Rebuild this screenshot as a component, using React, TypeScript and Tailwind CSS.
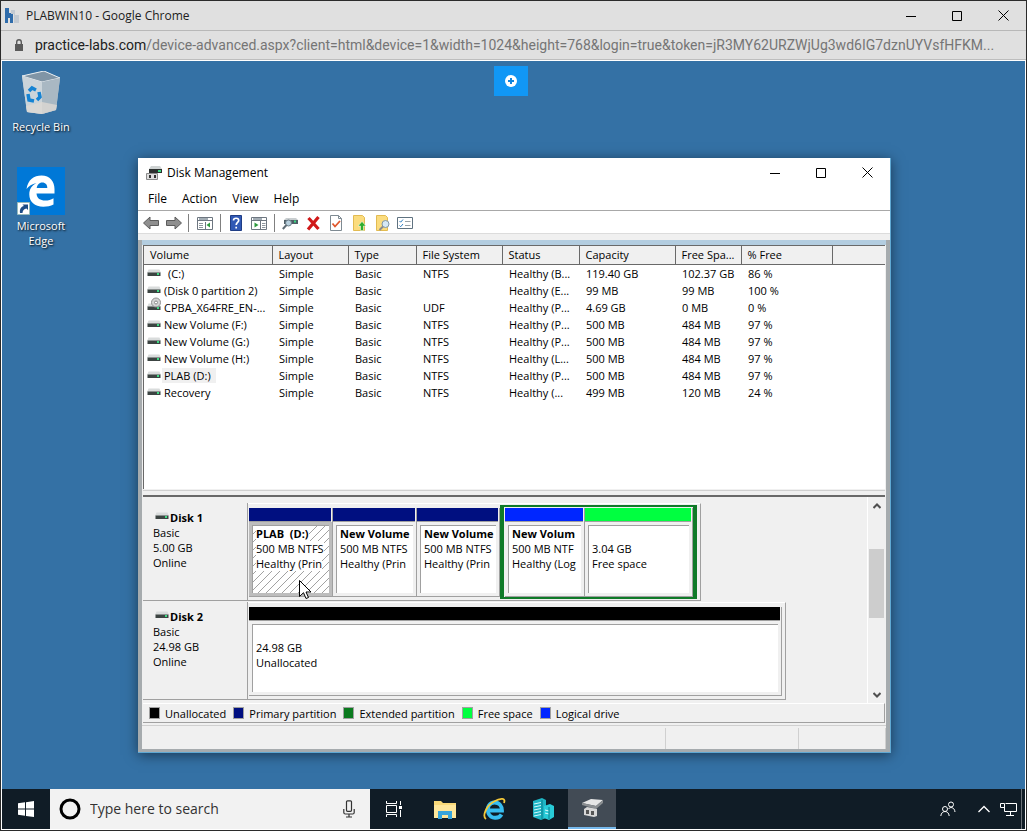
import React from 'react';

const volumes = [
  { name: '(C:)', fs: 'NTFS', status: 'Healthy (B...', capacity: '119.40 GB', free: '102.37 GB', pct: '86 %' },
  { name: '(Disk 0 partition 2)', fs: '', status: 'Healthy (E...', capacity: '99 MB', free: '99 MB', pct: '100 %' },
  { name: 'CPBA_X64FRE_EN-...', fs: 'UDF', status: 'Healthy (P...', capacity: '4.69 GB', free: '0 MB', pct: '0 %', cd: true },
  { name: 'New Volume (F:)', fs: 'NTFS', status: 'Healthy (P...', capacity: '500 MB', free: '484 MB', pct: '97 %' },
  { name: 'New Volume (G:)', fs: 'NTFS', status: 'Healthy (P...', capacity: '500 MB', free: '484 MB', pct: '97 %' },
  { name: 'New Volume (H:)', fs: 'NTFS', status: 'Healthy (L...', capacity: '500 MB', free: '484 MB', pct: '97 %' },
  { name: 'PLAB (D:)', fs: 'NTFS', status: 'Healthy (P...', capacity: '500 MB', free: '484 MB', pct: '97 %', selected: true },
  { name: 'Recovery', fs: 'NTFS', status: 'Healthy (...', capacity: '499 MB', free: '120 MB', pct: '24 %' },
];

const columns = [
  { label: 'Volume', width: 'w-[128px]' },
  { label: 'Layout', width: 'w-[76px]' },
  { label: 'Type', width: 'w-[68px]' },
  { label: 'File System', width: 'w-[86px]' },
  { label: 'Status', width: 'w-[77px]' },
  { label: 'Capacity', width: 'w-[96px]' },
  { label: 'Free Spa...', width: 'w-[66px]' },
  { label: '% Free', width: 'w-[91px]' },
  { label: '', width: '' },
];

const legend = [
  { label: 'Unallocated', color: 'bg-black' },
  { label: 'Primary partition', color: 'bg-[#000f80]' },
  { label: 'Extended partition', color: 'bg-[#0a7a1e]' },
  { label: 'Free space', color: 'bg-[#00ff40]' },
  { label: 'Logical drive', color: 'bg-[#0026ff]' },
];

const DriveIcon = ({ cd, className = '' }: { cd?: boolean; className?: string }) => (
  <svg width="14" height="16" viewBox="0 0 14 16" className={`shrink-0 overflow-visible ${className}`}>
    <path d="M1.500 4.500h11L14 8H0z" fill="#d9dcdc" />
    <rect x=".5" y="7.500" width="13" height="3.500" fill="#3c4442" />
    <rect x="10" y="8" width="2" height="2" fill="#3ddc84" />
    {cd && (
      <g>
        <circle cx="9" cy="3.500" r="4.500" fill="#d4d4d4" stroke="#909090" />
        <circle cx="9" cy="3.500" r="1.500" fill="#fff" stroke="#8a8a8a" />
      </g>
    )}
  </svg>
);

const WindowButtons = ({ className }: { className: string }) => (
  <div className={`flex text-black ${className}`}>
    <button aria-label="Minimize" className="w-[46px] h-full flex items-center justify-center">
      <svg width="10" height="10" stroke="currentColor"><path d="M0 5.500h10" /></svg>
    </button>
    <button aria-label="Maximize" className="w-[46px] h-full flex items-center justify-center">
      <svg width="10" height="10" stroke="currentColor" fill="none"><path d="M.5.5h9v9h-9z" /></svg>
    </button>
    <button aria-label="Close" className="w-[46px] h-full flex items-center justify-center">
      <svg width="11" height="11" stroke="currentColor" fill="none"><path d="M.5.5l10 10M10.500 .5l-10 10" /></svg>
    </button>
  </div>
);

const ToolButton = ({ label, className = '', children }: { label: string; className?: string; children: React.ReactNode }) => (
  <button aria-label={label} className={`w-4 h-4 shrink-0 ${className}`}>
    <svg width="16" height="16" viewBox="0 0 16 16" fill="none" className="overflow-visible">
      {children}
    </svg>
  </button>
);

const Separator = () => <div className="w-px h-[18px] bg-[#808080]" />;

const Toolbar = () => (
  <div className="h-[23px] flex items-center pl-[5px] pt-[2px] border-b border-[#dcdcdc] bg-white">
    <ToolButton label="Back">
      <path d="M.5 8L7 2v3.500h8.500v5H7V14z" fill="#8f8f8f" stroke="#5c5c5c" />
    </ToolButton>
    <ToolButton label="Forward" className="ml-[7px] mr-[6px]">
      <path d="M15.500 8L9 2v3.500H.5v5H9V14z" fill="#8f8f8f" stroke="#5c5c5c" />
    </ToolButton>
    <Separator />
    <ToolButton label="Show console tree" className="ml-[8px] mr-[7px]">
      <path d="M.5 2.500h15v12H.5zM.5 5.500h15M8.500 7v7" fill="#fff" stroke="#6d7680" />
      <path d="M2 4h9" stroke="#a3adb5" strokeWidth="2" />
      <path d="M2 8.500h4M2 10.500h4M2 12.500h4" stroke="#8c959c" />
      <path d="M13 7.500v5L9.500 10z" fill="#2d9a3d" />
    </ToolButton>
    <Separator />
    <ToolButton label="Help" className="ml-[7px]">
      <path d="M2.500.5h11v15h-11z" fill="#3159b5" stroke="#1f3d85" />
      <path d="M5.500 5.500C5.500 2.500 10.700 2.500 10.700 5.500C10.700 7.500 8.200 7.500 8.200 10M8.200 11.700v1.800" stroke="#fff" strokeWidth="1.700" />
    </ToolButton>
    <ToolButton label="Show action pane" className="ml-[7px] mr-[7px]">
      <path d="M.5 2.500h15v12H.5zM.5 5.500h15M9.500 6v8" fill="#fff" stroke="#6d7680" />
      <path d="M2 4h9" stroke="#a3adb5" strokeWidth="2" />
      <path d="M11 8.500h3.500M11 10.500h3.500M11 12.500h3.500" stroke="#8c959c" />
      <path d="M3.500 7.500v5L7.500 10z" fill="#2d9a3d" />
    </ToolButton>
    <Separator />
    <ToolButton label="Connect" className="ml-[7px]">
      <path d="M2 5l2-2h10l2 2z" fill="#c9ced0" />
      <path d="M2 5h14v4H2z" fill="#4e5e66" />
      <path d="M12 6.500h2" stroke="#3ddc84" strokeWidth="2" />
      <circle cx="6.500" cy="8" r="3" fill="#b8d0de" stroke="#6c7d88" />
      <path d="M4.500 10L.8 14" stroke="#5f6c75" strokeWidth="2" />
    </ToolButton>
    <ToolButton label="Delete" className="ml-[7px]">
      <path d="M3.500 3l10 11M13.500 2L3 14.500" stroke="#d01818" strokeWidth="3.200" />
    </ToolButton>
    <ToolButton label="Properties" className="ml-[7px]">
      <path d="M2.500.5h8l3 3v12h-11z" fill="#fff" stroke="#7e8a92" />
      <path d="M10.500.5v3h3" stroke="#7e8a92" />
      <path d="M4.500 8.500l2.500 3 5-5.500" stroke="#e0572c" strokeWidth="1.800" />
    </ToolButton>
    <ToolButton label="Extend" className="ml-[8px]">
      <path d="M1.500.5h9l2 2v13h-11z" fill="#fbdc7e" stroke="#e2bb52" />
      <path d="M10 6.500l4 4.500h-2.500v4.500h-3V11H6z" fill="#2fae2f" stroke="#fff" strokeWidth=".5" />
    </ToolButton>
    <ToolButton label="Explore" className="ml-[7px]">
      <path d="M1.500.5h9l2 2v13h-11z" fill="#fbdc7e" stroke="#e2bb52" />
      <circle cx="10.500" cy="9" r="3.500" fill="#d5e8f5" stroke="#7f95a5" />
      <path d="M8 11.500L4.500 15" stroke="#8b8b8b" strokeWidth="2" />
    </ToolButton>
    <ToolButton label="List" className="ml-[6px]">
      <path d="M.5 2.500h15v11H.5z" fill="#fff" stroke="#5f7280" />
      <path d="M2.500 6l1.200 1.200L6 4.500M2.500 10.500l1.200 1.200L6 9" stroke="#2f7fc4" />
      <path d="M8 6.500h5.500M8 10.500h5.500" stroke="#98a2a8" />
    </ToolButton>
  </div>
);

const VolumeTable = () => (
  <div className="h-[244px] bg-white border-l border-t border-[#696969] overflow-hidden">
    <table className="w-full table-fixed border-collapse text-left">
      <thead>
        <tr className="h-[18px] bg-[#f0f0f0]">
          {columns.map((c) => (
            <th key={c.label} className={`${c.width} p-0 pl-[6px] font-normal whitespace-nowrap border-r border-b border-[#696969] last:border-r-0`}>
              {c.label}
            </th>
          ))}
        </tr>
      </thead>
      <tbody>
        {volumes.map((v) => (
          <tr key={v.name} className="h-[17px] whitespace-nowrap">
            <td className="p-0 pl-[3px]">
              <div className="flex items-center h-[17px]">
                <DriveIcon cd={v.cd} />
                <span className={`ml-px pr-[5px] ${v.selected ? 'bg-[#f0f0f0]' : ''} ${v.name === '(C:)' ? 'pl-[6px]' : 'pl-[2px]'}`}>{v.name}</span>
              </div>
            </td>
            <td className="p-0 pl-[7px]">Simple</td>
            <td className="p-0 pl-[7px]">Basic</td>
            <td className="p-0 pl-[7px]">{v.fs}</td>
            <td className="p-0 pl-[7px]">{v.status}</td>
            <td className="p-0 pl-[7px]">{v.capacity}</td>
            <td className="p-0 pl-[7px]">{v.free}</td>
            <td className="p-0 pl-[7px]">{v.pct}</td>
            <td />
          </tr>
        ))}
      </tbody>
    </table>
  </div>
);

type PartitionProps = { bar: string; width: string; title?: string; lines: string[]; selected?: boolean };

const Partition = ({ bar, width, title, lines, selected }: PartitionProps) => (
  <div className={`${width} h-full flex flex-col shrink-0 border-r border-b border-[#a0a0a0]`}>
    <div className={`h-[14px] mr-px border-b border-[#a0a0a0] ${bar}`} />
    <div className={`flex-1 min-h-0 flex ${selected ? 'border-3 border-[#bdbdbd]' : 'p-[3px]'}`}>
      <div className="relative flex-1 min-w-0 pl-[3px] border-l border-t border-[#a0a0a0] bg-white">
        {selected && (
          <svg className="absolute inset-0 w-full h-full">
            <pattern id="hatch" width="8" height="8" patternUnits="userSpaceOnUse">
              <path d="M-1 9L9 -1M-1 1L1 -1M7 9L9 7" stroke="#8a8a8a" strokeWidth=".8" />
            </pattern>
            <rect width="100%" height="100%" fill="url(#hatch)" />
          </svg>
        )}
        <div className="relative leading-[15px] overflow-hidden whitespace-pre">
          <p className="h-[15px] font-bold">
            <span className={selected ? 'bg-white' : ''}>{title}</span>
          </p>
          {lines.map((l) => (
            <p key={l}>
              <span className={selected ? 'bg-white' : ''}>{l}</span>
            </p>
          ))}
        </div>
      </div>
    </div>
  </div>
);

const DiskRow = ({ name, size, children }: { name: string; size: string; children: React.ReactNode }) => (
  <div className="flex h-[98px]">
    <div className="w-[105px] shrink-0 pl-[10px] pt-[7px] leading-[15px] border-r border-b border-[#a0a0a0]">
      <div className="flex h-[15px] items-center pl-[2px] font-bold">
        <DriveIcon className="mb-1" />
        <span className="ml-px">{name}</span>
      </div>
      <p>Basic</p>
      <p>{size}</p>
      <p>Online</p>
    </div>
    <div className="flex pt-[4px] pl-px pr-[3px] pb-[3px] border-t border-t-white border-r border-b border-r-[#a0a0a0] border-b-[#a0a0a0]">
      {children}
    </div>
  </div>
);

const DiskPane = () => (
  <div className="flex h-[206px]">
    <div className="flex-1 min-w-0 pt-[6px] flex flex-col items-start gap-px">
      <DiskRow name="Disk 1" size="5.00 GB">
        <Partition bar="bg-[#000f80]" width="w-[84px]" title="PLAB  (D:)" lines={['500 MB NTFS', 'Healthy (Prin']} selected />
        <Partition bar="bg-[#000f80]" width="w-[84px]" title="New Volume" lines={['500 MB NTFS', 'Healthy (Prin']} />
        <Partition bar="bg-[#000f80]" width="w-[83px]" title="New Volume" lines={['500 MB NTFS', 'Healthy (Prin']} />
        <div className="flex -mt-[3px] -mb-[2px] pt-px pl-px border-x-4 border-y-2 border-[#0f7a28]">
          <Partition bar="bg-[#0026ff]" width="w-[80px]" title="New Volum" lines={['500 MB NTF', 'Healthy (Log']} />
          <Partition bar="bg-[#00ff40]" width="w-[108px]" lines={['3.04 GB', 'Free space']} />
        </div>
      </DiskRow>
      <DiskRow name="Disk 2" size="24.98 GB">
        <Partition bar="bg-black" width="w-[533px]" lines={['24.98 GB', 'Unallocated']} />
      </DiskRow>
    </div>
    <div className="w-[18px] flex flex-col items-center border-l border-white">
      <button aria-label="Scroll up" className="h-[17px] flex items-center">
        <svg width="8" height="6" fill="none" stroke="#505050" strokeWidth="2"><path d="M.5 5L4 1.500 7.500 5" /></svg>
      </button>
      <div className="mt-[35px] h-[69px] w-[15px] bg-[#cdcdcd]" />
      <button aria-label="Scroll down" className="mt-auto h-[17px] flex items-center">
        <svg width="8" height="6" fill="none" stroke="#505050" strokeWidth="2"><path d="M.5 1L4 4.500 7.500 1" /></svg>
      </button>
    </div>
  </div>
);

const DiskManagement = () => (
  <section className="absolute left-[136px] right-[134px] top-[97px] bg-[#f0f0f0] border-r border-b border-[#5fa8d3] shadow-[0_2px_12px_rgba(0,0,0,0.5)] text-black text-[11px] leading-[15px]">
    <div className="h-[29px] flex items-center bg-white text-xs">
      <svg width="16" height="16" viewBox="0 0 16 16" className="ml-2">
        <path d="M5 1h9l2 3H3z" fill="#cfd3d3" />
        <path d="M3 4h13v4H3z" fill="#2b2f2e" />
        <path d="M12 5h3v2h-3z" fill="#3ddc84" />
        <path d="M.5 8.500h11v6H.5z" fill="#dedede" stroke="#8a8a8a" />
        <path d="M3 10h2v3H3zM8 10h2v3H8z" fill="#333" />
      </svg>
      <h1 className="flex-1 ml-[5px]">Disk Management</h1>
      <WindowButtons className="h-full" />
    </div>
    <div className="h-[24px] flex items-center gap-[15px] pl-[10px] text-xs bg-white border-b border-[#a8a8a8]">
      <button>File</button>
      <button>Action</button>
      <button>View</button>
      <button>Help</button>
    </div>
    <Toolbar />
    <div className="h-[6px]" />
    <div className="border-x-4 border-b-3 border-[#a6abae]">
      <div className="border-t-5 border-[#b3cde0] pl-px pr-px">
        <VolumeTable />
        <div className="h-[7px] mt-px border-t border-[#d0d0d0] border-b-2 border-b-[#696969]" />
        <DiskPane />
        <div className="h-[20px] flex items-center gap-[7px] pl-[6px] border-t border-t-white border-b border-b-[#a0a0a0] border-r border-r-[#a0a0a0]">
          {legend.map((l) => (
            <div key={l.label} className="flex items-center gap-[5px]">
              <span className={`w-[11px] h-[12px] border border-[#a0a0a0] ${l.color}`} />
              <span>{l.label}</span>
            </div>
          ))}
        </div>
      </div>
      <div className="mt-[2px] h-[24px] pt-[2px] flex border-t border-[#d0d0d0]">
        <div className="flex-1 border-r border-[#d0d0d0]" />
        <div className="w-[133px] border-r border-[#d0d0d0]" />
        <div className="w-[87px] border-r border-[#d0d0d0]" />
      </div>
    </div>
  </section>
);

const DesktopIcons = () => (
  <div className="w-[78px] pt-[10px] flex flex-col items-center text-[11px] leading-[15px] text-white text-center [text-shadow:1px_1px_2px_#000]">
    <svg width="40" height="43" viewBox="0 0 40 43">
      <path d="M1 5l22-5 16 7-4 32-14 4-15-2z" fill="#b9c6d0" />
      <path d="M1 5l22-5 16 7-18 4z" fill="#8095a6" stroke="#e7edf1" />
      <path d="M1 5l20 6v32l-15-2z" fill="#cbd4da" />
      <path d="M21 11l18-4-4 32-14 4z" fill="#a9b8c3" />
      <path d="M5 35l16-4 15 3-1 5-14 4-15-2z" fill="#ddd8d3" opacity=".8" />
      <g fill="none" stroke="#1583d3" strokeWidth="3.500">
        <path d="M8 20l3-3 4 2" />
        <path d="M18 21l1 5-3 3" />
        <path d="M13 30l-5-1-1-6" />
      </g>
    </svg>
    <p className="mt-[5px]">Recycle Bin</p>
    <svg width="48" height="48" viewBox="0 0 48 48" className="mt-[33px]">
      <path d="M0 0h48v48H0z" fill="#0078d7" />
      <path
        d="M9.500 22C11 12.500 17 8.500 24.500 8.500c8.500 0 13 6 13 13.500v4.500H19.500c.3 5 4 7 8.500 7 3.500 0 6-.8 8.500-2.300v6.300c-3 1.600-6.300 2.200-10.200 2.200-8.600 0-14-5-14-12.200 0-5.200 2.700-9.200 7.200-11.400-4.500 1-7.800 3-10 5.900zM19.700 21h10.600c0-3.200-1.700-5.500-5-5.500s-5.200 2.500-5.600 5.500z"
        fill="#fff"
        fillRule="evenodd"
      />
      <path d="M.5 35.500h12v12H.5z" fill="#fff" stroke="#9bb" />
      <path d="M3 46c-.5-4 1-6.500 4-7L5.500 37.500H11V43l-1.500-1.600C7 42 5.500 43.500 5.500 46z" fill="#1c4c86" />
    </svg>
    <p className="mt-[3px] w-[70px]">Microsoft Edge</p>
  </div>
);

const TaskIcon = ({ label, active, children }: { label: string; active?: boolean; children: React.ReactNode }) => (
  <button aria-label={label} className={`w-12 h-full flex items-center justify-center ${active ? 'bg-[#424b55] border-b-2 border-[#76b9ed]' : ''}`}>
    {children}
  </button>
);

const Taskbar = () => (
  <footer className="h-10 flex bg-[#101c26] text-white">
    <button aria-label="Start" className="w-12 flex items-center justify-center">
      <svg width="16" height="16" fill="#fff">
        <path d="M0 2.300l7-1v6.300H0zM8 1.200L16 0v7.600H8zM0 8.500h7v6.300l-7-1zM8 8.500h8V16l-8-1.100z" />
      </svg>
    </button>
    <div className="w-80 flex items-center bg-[#f2f2f2] text-[#333]">
      <svg width="24" height="24" fill="none" stroke="#000" className="ml-[8px]">
        <circle cx="12" cy="12" r="9" strokeWidth="3" />
      </svg>
      <input aria-label="Search" placeholder="Type here to search" className="flex-1 min-w-0 ml-2 text-sm bg-transparent outline-none placeholder:text-[#333]" />
      <svg width="12" height="18" fill="none" stroke="#333" strokeWidth="1.200" className="mr-[15px]">
        <rect x="3.500" y=".8" width="5" height="10.500" rx="1" />
        <path d="M.8 9v3.500q0 1.500 1.500 1.500h7.400q1.500 0 1.500-1.500V9M6 14v3M3 17h6" />
      </svg>
    </div>
    <TaskIcon label="Task View">
      <svg width="18" height="16" fill="none" stroke="#fff">
        <path d="M1.500 0v2.500h10V0M1.500 16v-2.500h10V16M1.500 4.500h10v7h-10zM15.500 0v4M15.500 9v7" />
        <path d="M14 5h3v3h-3z" fill="#fff" stroke="none" />
      </svg>
    </TaskIcon>
    <div className="flex gap-px ml-[3px]">
      <TaskIcon label="File Explorer">
        <svg width="22" height="19">
          <path d="M0 1h7l2 2h13v15H0z" fill="#f9d978" />
          <path d="M0 5h22v13H0z" fill="#ffe79b" />
          <path d="M4 11h14v8h-4v-4H8v4H4z" fill="#37a5dc" />
        </svg>
      </TaskIcon>
      <TaskIcon label="Internet Explorer">
        <svg width="24" height="24" fill="none">
          <path d="M19.500 17.500C17 22 9 22 6.500 16.500 4 10 8 5.500 12.500 5.500c5 0 7.500 4 7.500 8H7" stroke="#37bdf0" strokeWidth="3.800" />
          <path d="M4 22C0 19 4 9 12 4.500 19 .5 24 1 22 6" stroke="#f5c939" strokeWidth="1.800" />
        </svg>
      </TaskIcon>
      <TaskIcon label="Server Manager">
        <svg width="23" height="22">
          <path d="M1 3l9-3 4 2v18l-5 2-8-3z" fill="#1eb5c4" />
          <path d="M12 8l6-2 4 2v11l-5 3-5-2z" fill="#28cbd8" />
          <path d="M2 6l7-1.500M2 9l7-1.500M2 12l7-1.500M2 15l7-1.500M2 18l7-1.500M13 12l4 1M13 15l4 1" stroke="#d3fbff" />
          <path d="M10 2v19M17 9v12" stroke="#087c8c" />
        </svg>
      </TaskIcon>
      <TaskIcon label="Disk Management" active>
        <svg width="23" height="22">
          <path d="M1 6l9-4 12 1-7 6z" fill="#e6e6e6" />
          <path d="M1 6l14 3 7-6v3l-7 6-14-4z" fill="#8b8f92" />
          <path d="M3 12l3-2 10 2v7l-3 1-10-2z" fill="#d7d7d7" />
          <path d="M5 13h3v4H5zM10 14h3v4h-3z" fill="#555" />
        </svg>
      </TaskIcon>
    </div>
    <div className="ml-auto flex items-center">
      <svg width="16" height="16" fill="none" stroke="#fff">
        <circle cx="11" cy="3.500" r="2.500" />
        <circle cx="5" cy="8" r="2.500" />
        <path d="M.8 15c.5-6 8-6 8.400 0M8.500 8c1.500-2.500 6-2 6.500 3" />
      </svg>
      <svg width="12" height="8" fill="none" stroke="#fff" strokeWidth="1.300" className="ml-[22px]"><path d="M.5 7L6 1.500 11.500 7" /></svg>
      <svg width="17" height="15" fill="none" stroke="#fff" className="ml-[10px]">
        <path d="M5.500 1.500h11v8h-12V5M.5 1.500h4v4h-4zM10.500 9.500v4M6 13.500h8" />
      </svg>
      <div className="w-px h-full ml-[4px] mr-[3px] bg-[#6b7278]" />
    </div>
  </footer>
);

const App = () => {
  return (
    <div className="min-h-screen flex flex-col border border-[#2b2b2b] font-['Open_Sans',sans-serif]">
      <header className="bg-[#e0e0e0] text-[#202020]">
        <div className="h-[30px] flex items-center border-b border-[#b8b8b8] text-xs">
          <svg width="15" height="15" className="ml-1">
            <path d="M0 0h4v5h4v10H5v-5H3v5H0z" fill="#2f6cab" />
            <path d="M6 2h4v5h4v8H9V6H6z" fill="#c3cad2" />
          </svg>
          <span className="flex-1 ml-[6px]">PLABWIN10 - Google Chrome</span>
          <WindowButtons className="h-full" />
        </div>
        <div className="h-[29px] flex items-center pl-[14px] border-b border-[#bdbdbd] font-[Roboto,sans-serif] text-sm">
          <svg width="8" height="12" fill="none" className="shrink-0">
            <path d="M0 5h8v7H0z" fill="#5a5a5a" />
            <path d="M1.700 5V3a2.300 2.300 0 0 1 4.600 0v2" stroke="#5a5a5a" strokeWidth="1.400" />
          </svg>
          <span className="ml-[12px] whitespace-nowrap text-[#757575]">
            <span className="text-[#202020]">practice-labs.com</span>
            /device-advanced.aspx?client=html&amp;device=1&amp;width=1024&amp;height=768&amp;login=true&amp;token=jR3MY62URZWjUg3wd6IG7dznUYVsfHFKM...
          </span>
        </div>
      </header>
      <div className="flex-1 flex flex-col border border-white">
        <main className="relative flex-1 bg-[#3471a5]">
          <DesktopIcons />
          <button aria-label="Open menu" className="absolute left-1/2 -ml-[20px] top-[5px] w-[34px] h-[30px] flex items-center justify-center bg-[#1197f5]">
            <svg width="12" height="12">
              <circle cx="6" cy="6" r="6" fill="#fff" />
              <path d="M6 3v6M3 6h6" stroke="#1185dd" strokeWidth="2" />
            </svg>
          </button>
          <DiskManagement />
          <svg width="12" height="19" className="absolute left-[297px] top-[519px]">
            <path d="M.5.5v16l4-3.800 2.500 5.800 2.500-1L7 12h5z" fill="#fff" stroke="#000" />
          </svg>
        </main>
        <Taskbar />
      </div>
    </div>
  );
};

export default App;
